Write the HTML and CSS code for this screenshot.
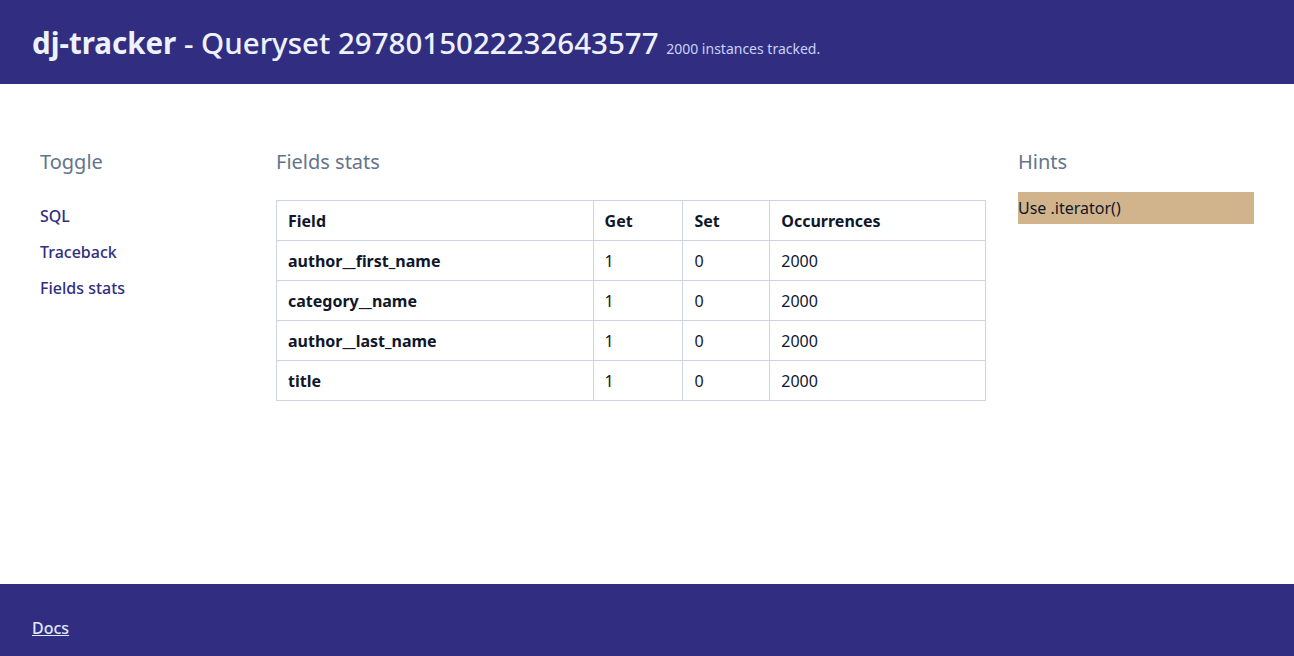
FILE: index.html
```html
<!DOCTYPE html>
<html lang="en">
<head>
<meta charset="utf-8">
<title>dj-tracker - Queryset 2978015022232643577</title>
<link rel="stylesheet" href="styles.css">
</head>
<body>
<header class="topbar">
  <h1 class="title"><span class="brand">dj-tracker</span> - Queryset 2978015022232643577 <small class="sub">2000 instances tracked.</small></h1>
</header>
<main class="content">
  <section class="col">
    <h2 class="heading">Toggle</h2>
    <nav class="toggles">
      <a href="#" class="toggle">SQL</a>
      <a href="#" class="toggle">Traceback</a>
      <a href="#" class="toggle">Fields stats</a>
    </nav>
  </section>
  <section class="col">
    <h2 class="heading">Fields stats</h2>
    <table class="stats">
      <colgroup><col class="c1"><col class="c2"><col class="c3"><col class="c4"></colgroup>
      <thead>
        <tr><th>Field</th><th>Get</th><th>Set</th><th>Occurrences</th></tr>
      </thead>
      <tbody>
        <tr><th>author__first_name</th><td>1</td><td>0</td><td>2000</td></tr>
        <tr><th>category__name</th><td>1</td><td>0</td><td>2000</td></tr>
        <tr><th>author__last_name</th><td>1</td><td>0</td><td>2000</td></tr>
        <tr><th>title</th><td>1</td><td>0</td><td>2000</td></tr>
      </tbody>
    </table>
  </section>
  <section class="col">
    <h2 class="heading">Hints</h2>
    <div class="hint">Use .iterator()</div>
  </section>
</main>
<footer class="footer">
  <a href="#" class="docs">Docs</a>
</footer>
</body>
</html>
```
FILE: styles.css
```css
* { box-sizing: border-box; }
html, body { margin: 0; padding: 0; }
body {
  font-family: "Noto Sans", "Open Sans", sans-serif;
  color: #0f172a;
  background: #fff;
  min-height: 656px;
  display: flex;
  flex-direction: column;
}
.topbar {
  background: #312e81;
  height: 84px;
  padding: 0 32px;
  display: flex;
  align-items: center;
}
.title {
  margin: 0;
  color: #eef2ff;
  font-size: 29.5px;
  font-weight: 500;
}
.brand { font-weight: 700; }
.sub {
  font-size: 14px;
  font-weight: 400;
  color: #c7d2fe;
}
.content {
  flex: 1;
  display: grid;
  grid-template-columns: 204px 710px 236px;
  column-gap: 32px;
  padding: 64px 40px 0;
}
.heading {
  margin: 0 0 24px;
  font-size: 20px;
  font-weight: 400;
  color: #64748b;
  line-height: 28px;
}
.toggles { display: flex; flex-direction: column; gap: 12px; padding-top: 4px; }
.toggle {
  color: #312e81;
  font-weight: 500;
  text-decoration: none;
  font-size: 16px;
  line-height: 24px;
}
.stats {
  width: 710px;
  border-collapse: collapse;
  font-size: 16px;
}
.c1 { width: 317px; }
.c2 { width: 90px; }
.c3 { width: 87px; }
.c4 { width: 216px; }
.stats th, .stats td {
  border: 1px solid #cbd5e1;
  height: 40px;
  padding: 0 11px;
  text-align: left;
  vertical-align: middle;
}
.stats th { font-weight: 700; }
.stats td { font-weight: 400; }
.hint {
  margin-top: -8px;
  background: #d2b48c;
  height: 32px;
  line-height: 32px;
  font-size: 16px;
}
.footer {
  background: #312e81;
  height: 72px;
  padding: 0 32px;
  display: flex;
  align-items: center;
}
.docs {
  color: #e0e7ff;
  font-weight: 500;
  font-size: 16px;
  padding-top: 16px;
}
```
